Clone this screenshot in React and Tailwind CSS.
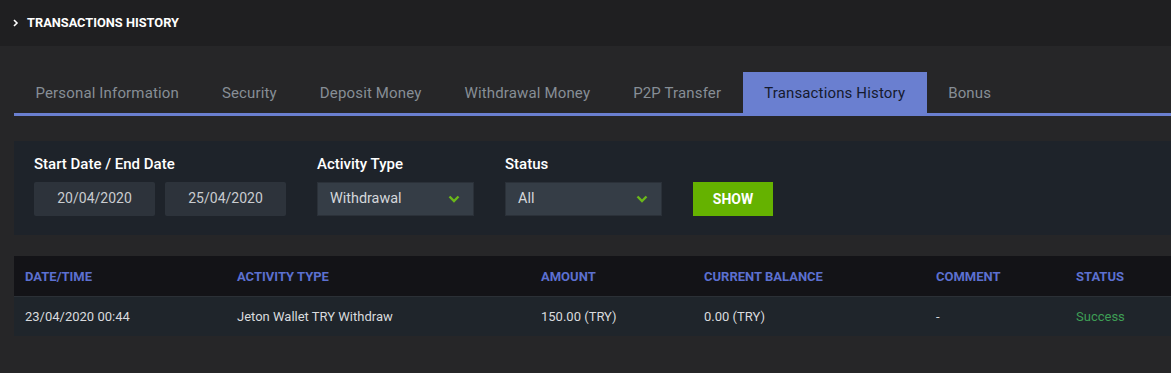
import React from 'react';

const tabs = [
  'Personal Information',
  'Security',
  'Deposit Money',
  'Withdrawal Money',
  'P2P Transfer',
  'Transactions History',
  'Bonus',
];

const columns = ['Date/Time', 'Activity Type', 'Amount', 'Current Balance', 'Comment', 'Status'];

const rows = [
  {
    date: '23/04/2020 00:44',
    type: 'Jeton Wallet TRY Withdraw',
    amount: '150.00 (TRY)',
    balance: '0.00 (TRY)',
    comment: '-',
    status: 'Success',
  },
];

const ChevronDown = () => (
  <svg width="12" height="8" viewBox="0 0 12 8" fill="none">
    <path d="M1.5 1.5l4.5 4.5 4.5-4.5" stroke="#6bb81a" strokeWidth="2.4" />
  </svg>
);

const SelectBox = ({ value }) => (
  <div className="flex h-[34px] w-[157px] items-center justify-between border border-[#2b3139] bg-[#353d46] pl-3 pr-[13px] text-[14.4px] text-[#d4d7db]">
    <span>{value}</span>
    <ChevronDown />
  </div>
);

const App = () => {
  const active = 'Transactions History';

  return (
    <div className="min-h-[373px] w-full bg-[#262628] font-['Roboto',sans-serif]">
      <div className="flex h-[46px] items-center bg-[#1f1f21] pl-[12px]">
        <svg width="8" height="10" viewBox="0 0 8 10" fill="none" className="mr-[7px]">
          <path d="M2 2l3 3-3 3" stroke="#ffffff" strokeWidth="1.6" />
        </svg>
        <h1 className="text-[12.8px] font-bold text-white">TRANSACTIONS HISTORY</h1>
      </div>

      <div className="pl-[14px] pt-[26px]">
        <div className="flex border-b-[3px] border-[#6a7fd0]">
          {tabs.map((tab) => (
            <div
              key={tab}
              className={
                tab === active
                  ? 'flex h-[41px] items-center bg-[#6a7fd0] px-[21.5px] pt-[2px] text-[15px] tracking-[0.15px] text-[#151a2e]'
                  : 'flex h-[41px] items-center px-[21.5px] pt-[2px] text-[15px] tracking-[0.15px] text-[#878e96]'
              }
            >
              {tab}
            </div>
          ))}
        </div>

        <div className="mt-[25px] flex h-[94px] items-start gap-[31px] bg-[#1e232a] pl-[20px] pt-[12px]">
          <div>
            <label className="block text-[15px] font-medium text-white">Start Date / End Date</label>
            <div className="mt-[6px] flex gap-[10px]">
              <div className="flex h-[34px] w-[121px] items-center justify-center rounded-[2px] bg-[#2d333b] text-[14px] text-[#c9ccd0]">
                20/04/2020
              </div>
              <div className="flex h-[34px] w-[121px] items-center justify-center rounded-[2px] bg-[#2d333b] text-[14px] text-[#c9ccd0]">
                25/04/2020
              </div>
            </div>
          </div>
          <div>
            <label className="block text-[15px] font-medium text-white">Activity Type</label>
            <div className="mt-[6px]">
              <SelectBox value="Withdrawal" />
            </div>
          </div>
          <div>
            <label className="block text-[15px] font-medium text-white">Status</label>
            <div className="mt-[6px]">
              <SelectBox value="All" />
            </div>
          </div>
          <button className="mt-[29px] flex h-[34px] w-[80px] items-center justify-center bg-[#65b200] text-[14px] font-bold text-white">
            SHOW
          </button>
        </div>

        <div className="mt-[21px]">
          <div className="grid h-[40px] grid-cols-[212px_304px_163px_232px_140px_1fr] items-center bg-[#131317] pl-[11px] pt-[1px]">
            {columns.map((c) => (
              <div key={c} className="text-[13px] font-bold uppercase text-[#5c70d0]">
                {c}
              </div>
            ))}
          </div>
          {rows.map((r) => (
            <div
              key={r.date}
              className="grid h-[40px] grid-cols-[212px_304px_163px_232px_140px_1fr] items-center border-t border-[#2b3036] bg-[#1f252b] pl-[11px] text-[13px] text-[#d9dbde]"
            >
              <div>{r.date}</div>
              <div>{r.type}</div>
              <div>{r.amount}</div>
              <div>{r.balance}</div>
              <div>{r.comment}</div>
              <div className="text-[#3e9e55]">{r.status}</div>
            </div>
          ))}
        </div>
      </div>
    </div>
  );
};

export default App;
